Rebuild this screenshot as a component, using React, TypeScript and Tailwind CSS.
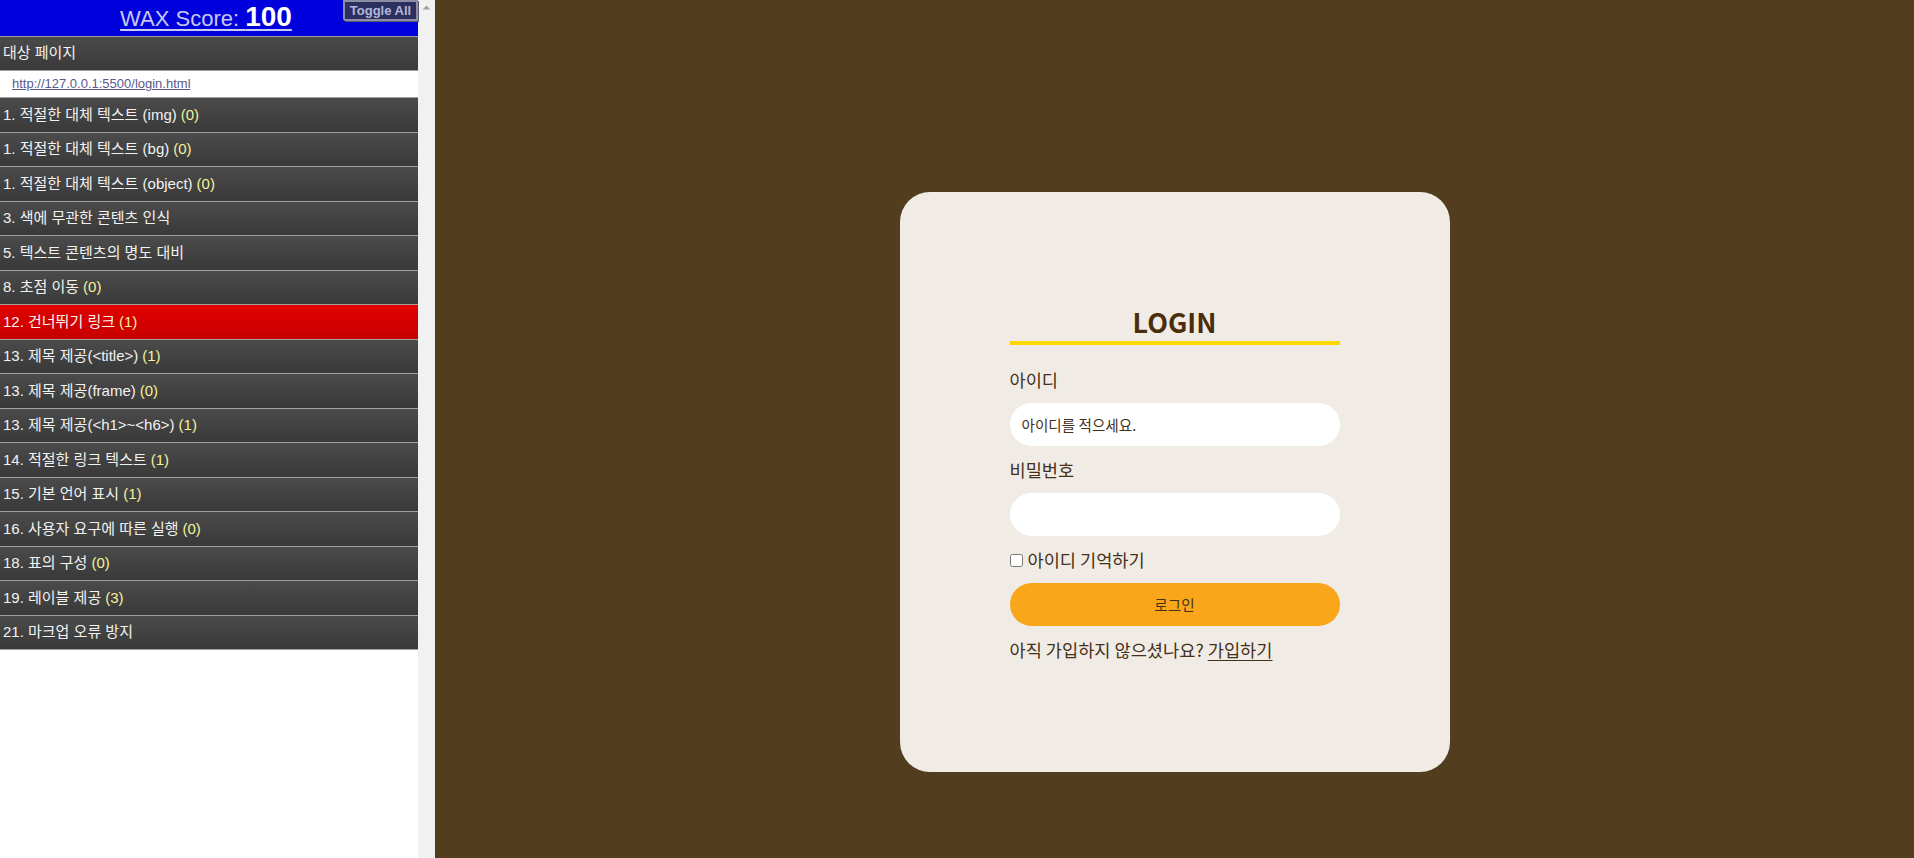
import React from "react";

type Item = { t: string; c?: string; red?: boolean };

const items: Item[] = [
  { t: "1. 적절한 대체 텍스트 (img)", c: "(0)" },
  { t: "1. 적절한 대체 텍스트 (bg)", c: "(0)" },
  { t: "1. 적절한 대체 텍스트 (object)", c: "(0)" },
  { t: "3. 색에 무관한 콘텐츠 인식" },
  { t: "5. 텍스트 콘텐츠의 명도 대비" },
  { t: "8. 초점 이동", c: "(0)" },
  { t: "12. 건너뛰기 링크", c: "(1)", red: true },
  { t: "13. 제목 제공(<title>)", c: "(1)" },
  { t: "13. 제목 제공(frame)", c: "(0)" },
  { t: "13. 제목 제공(<h1>~<h6>)", c: "(1)" },
  { t: "14. 적절한 링크 텍스트", c: "(1)" },
  { t: "15. 기본 언어 표시", c: "(1)" },
  { t: "16. 사용자 요구에 따른 실행", c: "(0)" },
  { t: "18. 표의 구성", c: "(0)" },
  { t: "19. 레이블 제공", c: "(3)" },
  { t: "21. 마크업 오류 방지" },
];

const panelFont = { fontFamily: '"Liberation Sans", "Noto Sans CJK KR", sans-serif' };
const formFont = { fontFamily: '"Noto Sans CJK KR", "Noto Sans", sans-serif' };

function WaxPanel() {
  return (
    <div className="flex h-full w-[435px] shrink-0" style={panelFont}>
      <div className="flex w-[418px] flex-col bg-white">
        <div className="relative flex h-[36px] items-start justify-center bg-[#0000dd] pr-[6px]">
          <a href="#" className="mt-[2px] text-[22px] leading-[30px] text-[#c8c8f0] underline decoration-[2px] underline-offset-[3px]">
            WAX Score: <b className="text-[28px] text-white">100</b>
          </a>
          <button className="absolute right-0 top-0 h-[21px] w-[75px] rounded-bl-[3px] border-2 border-[#8d8ea6] bg-[#2c3060] text-[13px] font-bold leading-[16px] text-[#b4b7d6] shadow-[1px_1px_0_#5a5a70]">
            Toggle All
          </button>
        </div>
        <div className="flex h-[34px] items-center border-t border-[#a0a0a0] bg-linear-to-b from-[#4b4b4b] to-[#393939] pl-[3px] text-[15px] text-[#f2f2f2]">
          대상 페이지
        </div>
        <div className="flex h-[27px] items-center border-t border-[#a0a0a0] bg-white pl-[12px]">
          <a href="#" className="text-[13px] text-[#5a5a8c] underline">
            http://127.0.0.1:5500/login.html
          </a>
        </div>
        {items.map((it, i) => (
          <div
            key={i}
            className={
              it.red
                ? "flex h-[34.5px] items-center border-t border-[#a0a0a0] bg-linear-to-b from-[#e20000] to-[#c60000] pl-[3px] text-[15px] text-[#f4f4f4]"
                : "flex h-[34.5px] items-center border-t border-[#a0a0a0] bg-linear-to-b from-[#4b4b4b] to-[#393939] pl-[3px] text-[15px] text-[#f2f2f2]"
            }
          >
            <span className="whitespace-pre">{it.t}</span>
            {it.c && <span className="ml-[4px] text-[#f4f19a]">{it.c}</span>}
          </div>
        ))}
        <div className="h-px bg-[#a0a0a0]" />
      </div>
      <div className="flex w-[17px] justify-center bg-[#f1f1f1] pt-[5px]">
        <svg width="9" height="5" viewBox="0 0 9 5">
          <path d="M0.5 4.5 L4.5 0.5 L8.5 4.5 Z" fill="#a3a3a3" />
        </svg>
      </div>
    </div>
  );
}

function LoginCard() {
  return (
    <div className="h-[580px] w-[550px] rounded-[30px] bg-[#f0ece5] px-[110px] pt-[108px] text-[#45301a]" style={formFont}>
      <h1 className="h-[45px] border-b-4 border-[#ffd700] pt-[3px] text-center text-[27px] font-bold leading-[38px] text-[#4a2e0c]">
        LOGIN
      </h1>
      <label className="mt-[23px] block text-[17.6px] leading-[24px]">아이디</label>
      <input
        className="mt-[11px] block h-[43px] w-full rounded-full bg-white px-[12px] text-[14.6px] text-[#45301a] outline-none placeholder:text-[#45301a]"
        placeholder="아이디를 적으세요."
      />
      <label className="mt-[12px] block text-[17.6px] leading-[24px]">비밀번호</label>
      <input type="password" className="mt-[11px] block h-[43px] w-full rounded-full bg-white px-[12px] text-[14.6px] outline-none" />
      <label className="mt-[12px] flex h-[24px] items-center text-[17.6px]">
        <input type="checkbox" className="mr-[5px] h-[13px] w-[13px]" />
        아이디 기억하기
      </label>
      <button className="mt-[11px] block h-[43px] w-full rounded-full bg-[#f9a61b] text-[14.6px] text-[#45301a]">로그인</button>
      <p className="mt-[12px] text-[17.6px] leading-[24px]">
        아직 가입하지 않으셨나요?{" "}
        <a href="#" className="underline underline-offset-[3px]">
          가입하기
        </a>
      </p>
    </div>
  );
}

export default function App() {
  return (
    <div className="flex h-screen w-full overflow-hidden">
      <WaxPanel />
      <main className="flex flex-1 justify-center bg-[#523d1f] pt-[192px]">
        <LoginCard />
      </main>
    </div>
  );
}
